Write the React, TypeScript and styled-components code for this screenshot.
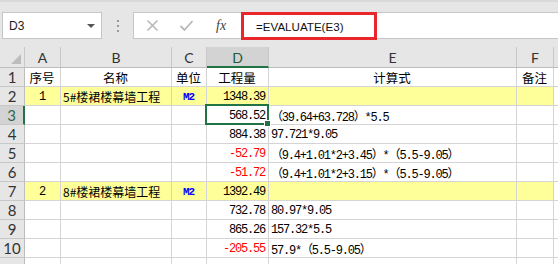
import React from 'react';
import styled, { createGlobalStyle } from 'styled-components';

const GlobalStyle = createGlobalStyle`
  html, body {
    margin: 0;
    padding: 0;
    background: #ffffff;
    overflow: hidden;
  }
  body {
    width: 558px;
    height: 264px;
  }
`;

const GREEN = '#217346';

const Toolbar = styled.div`
  height: 47px;
  box-sizing: border-box;
  background: #e6e6e6;
  border-top: 2px solid #d9d9d9;
  display: flex;
  align-items: flex-start;
  padding: 10px 0 0 2px;
`;

const NameBox = styled.div`
  width: 100px;
  height: 27px;
  box-sizing: border-box;
  background: #fff;
  border: 1px solid #c6c6c6;
  display: flex;
  align-items: center;
  justify-content: space-between;
  padding: 0 6px 0 6px;
  font-family: 'Liberation Sans', Arial, sans-serif;
  font-size: 12px;
  color: #222;
`;

const DropArrow = styled.span`
  width: 0;
  height: 0;
  border-left: 4px solid transparent;
  border-right: 4px solid transparent;
  border-top: 4px solid #555;
`;

const Grip = styled.div`
  width: 31px;
  height: 27px;
  display: flex;
  flex-direction: column;
  align-items: center;
  justify-content: center;
  gap: 3px;
`;

const GripDot = styled.span`
  width: 2px;
  height: 2px;
  background: #9a9a9a;
`;

const FxBox = styled.div`
  width: 108px;
  height: 27px;
  box-sizing: border-box;
  background: #fff;
  border: 1px solid #c6c6c6;
  border-right: none;
  display: flex;
  align-items: center;
  padding-left: 12px;
  gap: 20px;
`;

const FxLabel = styled.span`
  font-family: 'Liberation Serif', 'Times New Roman', serif;
  font-style: italic;
  font-size: 14px;
  color: #444;
  margin-left: 2px;
`;

const FormulaInput = styled.div`
  flex: 1;
  height: 27px;
  box-sizing: border-box;
  background: #fff;
  border: 1px solid #c6c6c6;
  border-left: none;
  border-right: none;
`;

const Highlight = styled.div`
  width: 136px;
  height: 28px;
  margin-top: -1px;
  box-sizing: border-box;
  border: 3px solid #e8262b;
  display: flex;
  align-items: center;
  padding-left: 12px;
  font-family: 'Liberation Sans', Arial, sans-serif;
  font-size: 11.6px;
  color: #111;
`;

const Sheet = styled.div`
  display: grid;
  grid-template-columns: 25px 36px 111px 35px 62px 248px 37px 1fr;
  grid-template-rows: 21px;
  grid-auto-rows: 19px;
`;

const ColHead = styled.div<{ $active?: boolean }>`
  box-sizing: border-box;
  background: ${p => (p.$active ? '#d3d3d3' : '#e6e6e6')};
  border-right: 1px solid #c8c8c8;
  border-bottom: ${p => (p.$active ? `2px solid ${GREEN}` : '1px solid #bdbdbd')};
  display: flex;
  align-items: center;
  justify-content: center;
  padding-top: ${p => (p.$active ? '1px' : '0')};
  font-family: Lato, 'Liberation Sans', sans-serif;
  font-size: 14px;
  color: ${p => (p.$active ? '#1c5a38' : '#333')};
`;

const Corner = styled.div`
  box-sizing: border-box;
  background: #e6e6e6;
  border-right: 1px solid #c8c8c8;
  border-bottom: 1px solid #bdbdbd;
  display: flex;
  align-items: flex-end;
  justify-content: flex-end;
  padding: 0 3px 3px 0;
`;

const SelectAll = styled.span`
  width: 0;
  height: 0;
  border-left: 10px solid transparent;
  border-bottom: 10px solid #bcbcbc;
`;

const RowHead = styled.div<{ $active?: boolean }>`
  box-sizing: border-box;
  background: ${p => (p.$active ? '#d3d3d3' : '#e6e6e6')};
  border-right: ${p => (p.$active ? `2px solid ${GREEN}` : '1px solid #bdbdbd')};
  border-bottom: 1px solid #c8c8c8;
  display: flex;
  align-items: center;
  justify-content: center;
  font-family: Lato, 'Liberation Sans', sans-serif;
  font-size: 15px;
  color: ${p => (p.$active ? '#2f6b4a' : '#333')};
`;

type Align = 'left' | 'center' | 'right';
type Face = 'num' | 'cjk' | 'title';

const faces: Record<Face, string> = {
  num: `font-family: 'Liberation Mono', 'Noto Sans CJK SC', monospace; font-size: 12px; letter-spacing: -1.2px;`,
  cjk: `font-family: 'Noto Sans CJK SC', sans-serif; font-size: 12px;`,
  title: `font-family: 'Noto Sans CJK SC', sans-serif; font-size: 12.5px;`,
};

const Cell = styled.div<{ $align?: Align; $fill?: boolean; $color?: string; $face?: Face; $active?: boolean }>`
  position: relative;
  box-sizing: border-box;
  background: ${p => (p.$fill ? '#ffff99' : '#fff')};
  border-right: 1px solid #d4d4d4;
  border-bottom: 1px solid #d4d4d4;
  display: flex;
  align-items: center;
  justify-content: ${p => (p.$align === 'right' ? 'flex-end' : p.$align === 'center' ? 'center' : 'flex-start')};
  padding: 1px 3px 0 2px;
  white-space: nowrap;
  overflow: visible;
  color: ${p => p.$color || '#000'};
  z-index: ${p => (p.$active ? 2 : 'auto')};
  ${p => faces[p.$face || 'num']}
`;

const Selection = styled.span`
  position: absolute;
  top: -2px;
  left: -2px;
  right: -1px;
  bottom: -1px;
  border: 2px solid ${GREEN};
  pointer-events: none;
`;

const FillHandle = styled.span`
  position: absolute;
  right: -4px;
  bottom: -4px;
  width: 5px;
  height: 5px;
  background: ${GREEN};
  border: 1px solid #fff;
`;

const Unit = styled.span`
  font-family: 'Liberation Mono', monospace;
  font-size: 11px;
  letter-spacing: -1px;
  color: #0000ff;
  font-weight: bold;
`;

type Row = {
  a?: string;
  b?: string;
  c?: string;
  d?: string;
  e?: string;
  fill?: boolean;
  neg?: boolean;
  label?: boolean;
};

const rows: Row[] = [
  { a: '1', b: '5#楼裙楼幕墙工程', c: 'M2', d: '1348.39', fill: true },
  { d: '568.52', e: '（39.64+63.728）*5.5' },
  { d: '884.38', e: '97.721*9.05' },
  { d: '-52.79', e: '（9.4+1.01*2+3.45）*（5.5-9.05）', neg: true },
  { d: '-51.72', e: '（9.4+1.01*2+3.15）*（5.5-9.05）', neg: true },
  { a: '2', b: '8#楼裙楼幕墙工程', c: 'M2', d: '1392.49', fill: true },
  { d: '732.78', e: '80.97*9.05' },
  { d: '865.26', e: '157.32*5.5' },
  { d: '-205.55', e: '57.9*（5.5-9.05）', neg: true },
  { label: false },
];

const letters = ['A', 'B', 'C', 'D', 'E', 'F', ''];
const titles = ['序号', '名称', '单位', '工程量', '计算式', '备注'];

const CrossIcon = () => (
  <svg width="13" height="13" viewBox="0 0 13 13">
    <path d="M1.5 1.5 L11.5 11.5 M11.5 1.5 L1.5 11.5" stroke="#b8b8b8" strokeWidth="1.6" fill="none" />
  </svg>
);

const CheckIcon = () => (
  <svg width="15" height="13" viewBox="0 0 15 13">
    <path d="M1.5 7 L5.5 11 L13.5 2" stroke="#b8b8b8" strokeWidth="1.8" fill="none" />
  </svg>
);

export default function App() {
  return (
    <>
      <GlobalStyle />
      <Toolbar>
        <NameBox>
          <span>D3</span>
          <DropArrow />
        </NameBox>
        <Grip>
          <GripDot />
          <GripDot />
          <GripDot />
        </Grip>
        <FxBox>
          <CrossIcon />
          <CheckIcon />
          <FxLabel>fx</FxLabel>
        </FxBox>
        <FormulaInput>
          <Highlight>=EVALUATE(E3)</Highlight>
        </FormulaInput>
      </Toolbar>
      <Sheet>
        <Corner>
          <SelectAll />
        </Corner>
        {letters.map((l, i) => (
          <ColHead key={`h${i}`} $active={l === 'D'}>
            {l}
          </ColHead>
        ))}

        <RowHead>1</RowHead>
        {titles.map((t, i) => (
          <Cell key={`t${i}`} $align="center" $face="title">
            {t}
          </Cell>
        ))}
        <Cell />

        {rows.map((r, i) => {
          const n = i + 2;
          const active = n === 3;
          return (
            <React.Fragment key={`r${n}`}>
              <RowHead $active={active}>{r.label === false ? '' : n}</RowHead>
              <Cell $fill={r.fill} $align="center">{r.a}</Cell>
              <Cell $fill={r.fill} $face="cjk">{r.b}</Cell>
              <Cell $fill={r.fill} $align="center">
                {r.c && <Unit>{r.c}</Unit>}
              </Cell>
              <Cell $fill={r.fill} $align="right" $color={r.neg ? '#ff0000' : undefined} $active={active}>
                {r.d}
                {active && (
                  <Selection>
                    <FillHandle />
                  </Selection>
                )}
              </Cell>
              <Cell $fill={r.fill}>{r.e}</Cell>
              <Cell $fill={r.fill} />
              <Cell />
            </React.Fragment>
          );
        })}
      </Sheet>
    </>
  );
}
